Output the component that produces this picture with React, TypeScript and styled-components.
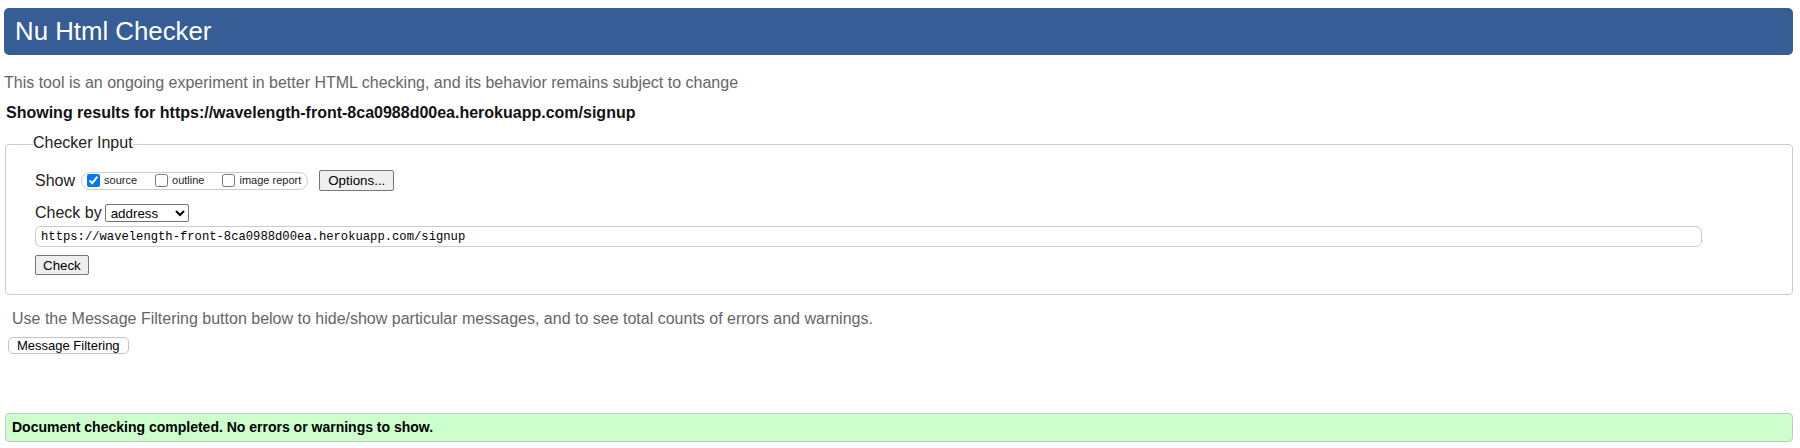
import React from "react";
import styled, { createGlobalStyle } from "styled-components";

const GlobalStyle = createGlobalStyle`
  html, body {
    margin: 0;
    padding: 0;
    background: #ffffff;
  }
  body {
    font-family: "Liberation Sans", Arial, sans-serif;
    font-size: 16px;
    color: #222;
  }
`;

const Page = styled.div`
  padding: 8px 7px 0 4px;
  display: flex;
  flex-direction: column;
  align-items: stretch;
`;

const Header = styled.h1`
  margin: 0;
  height: 47px;
  background: #365d95;
  border-radius: 5px;
  color: #ffffff;
  font-size: 25.8px;
  font-weight: normal;
  line-height: 47px;
  padding-left: 11px;
`;

const Tagline = styled.p`
  margin: 17.5px 0 0 0;
  font-size: 16px;
  line-height: 20px;
  color: #666;
`;

const ResultsFor = styled.p`
  margin: 10px 0 0 0;
  padding-left: 2px;
  font-size: 16px;
  line-height: 20px;
  font-weight: bold;
  color: #111;
`;

const Fieldset = styled.fieldset`
  margin: 10px 0 0 1px;
  padding: 0 29px 18.5px 29px;
  border: 1px solid #cccccc;
  border-radius: 4px;
  min-width: 0;
`;

const Legend = styled.legend`
  margin-left: -2px;
  padding: 0 0 3px 0;
  font-size: 16px;
  line-height: 20px;
  color: #222;
`;

const Rows = styled.div`
  display: flex;
  flex-direction: column;
  align-items: flex-start;
  padding-top: 14.5px;
`;

const ShowRow = styled.div`
  display: flex;
  align-items: center;
  height: 21px;
`;

const RowLabel = styled.span<{ $gap?: number }>`
  font-size: 16px;
  color: #222;
  margin-right: ${(p) => p.$gap ?? 6}px;
`;

const OptionGroup = styled.div`
  display: flex;
  align-items: center;
  gap: 18px;
  height: 16px;
  padding: 0 6px 0 5px;
  border: 1px solid #cccccc;
  border-radius: 9px;
`;

const OptionItem = styled.label`
  display: flex;
  align-items: center;
  font-size: 11px;
  color: #222;
  line-height: 13px;
`;

const Checkbox = styled.input.attrs({ type: "checkbox" })`
  width: 13px;
  height: 13px;
  margin: 0 4px 0 0;
  accent-color: #0075ff;
`;

const NativeButton = styled.button<{ $ml?: number }>`
  font-family: "Liberation Sans", Arial, sans-serif;
  font-size: 13.33px;
  color: #000;
  background: #efefef;
  border: 1px solid #767676;
  border-radius: 2px;
  padding: 0 8px;
  margin-left: ${(p) => p.$ml ?? 0}px;
  height: ${(p) => (p.$ml ? 21 : 20)}px;
  line-height: 17px;
`;

const CheckByRow = styled.div`
  display: flex;
  align-items: baseline;
  margin-top: 12.5px;
`;

const Select = styled.select`
  width: 84px;
  height: 18px;
  font-family: "Liberation Sans", Arial, sans-serif;
  font-size: 13.33px;
  color: #000;
  border: 1px solid #767676;
  border-radius: 2px;
  background: #fff;
  padding: 0 0 0 1px;
`;

const UrlInput = styled.input`
  box-sizing: border-box;
  width: 1667px;
  height: 21px;
  margin: 4.5px 0 0 0;
  padding: 0 5px;
  border: 1px solid #cccccc;
  border-radius: 6px;
  font-family: "Liberation Mono", "DejaVu Sans Mono", monospace;
  font-size: 12.2px;
  color: #000;
  outline: none;
`;

const CheckButton = styled(NativeButton)`
  margin-top: 8.3px;
  padding: 0 7px;
`;

const Hint = styled.p`
  margin: 14.5px 0 0 0;
  padding-left: 8px;
  font-size: 16px;
  line-height: 20px;
  color: #666;
`;

const FilterButton = styled.button`
  align-self: flex-start;
  margin: 7.5px 0 0 4px;
  height: 17px;
  padding: 0 8px;
  font-family: "Liberation Sans", Arial, sans-serif;
  font-size: 13px;
  line-height: 15px;
  color: #000;
  background: #ffffff;
  border: 1px solid #c4c4c4;
  border-radius: 5px;
`;

const Success = styled.p`
  margin: 59px 0 0 1px;
  padding: 5px 6px 5px 6px;
  background: #ccffcc;
  border: 1px solid #c6c6c6;
  border-radius: 4px;
  font-size: 14px;
  line-height: 17px;
  font-weight: bold;
  color: #000;
`;

export default function App() {
  const url = "https://wavelength-front-8ca0988d00ea.herokuapp.com/signup";
  return (
    <>
      <GlobalStyle />
      <Page>
        <Header>Nu Html Checker</Header>
        <Tagline>
          This tool is an ongoing experiment in better HTML checking, and its behavior remains subject to change
        </Tagline>
        <ResultsFor>Showing results for {url}</ResultsFor>
        <Fieldset>
          <Legend>Checker Input</Legend>
          <Rows>
            <ShowRow>
              <RowLabel>Show</RowLabel>
              <OptionGroup>
                <OptionItem>
                  <Checkbox defaultChecked />
                  source
                </OptionItem>
                <OptionItem>
                  <Checkbox />
                  outline
                </OptionItem>
                <OptionItem>
                  <Checkbox />
                  image report
                </OptionItem>
              </OptionGroup>
              <NativeButton $ml={11}>Options...</NativeButton>
            </ShowRow>
            <CheckByRow>
              <RowLabel $gap={3}>Check by</RowLabel>
              <Select defaultValue="address">
                <option value="address">address</option>
                <option value="file">file upload</option>
                <option value="text">text input</option>
              </Select>
            </CheckByRow>
            <UrlInput type="url" defaultValue={url} />
            <CheckButton>Check</CheckButton>
          </Rows>
        </Fieldset>
        <Hint>
          Use the Message Filtering button below to hide/show particular messages, and to see total counts of errors and warnings.
        </Hint>
        <FilterButton>Message Filtering</FilterButton>
        <Success>Document checking completed. No errors or warnings to show.</Success>
      </Page>
    </>
  );
}
